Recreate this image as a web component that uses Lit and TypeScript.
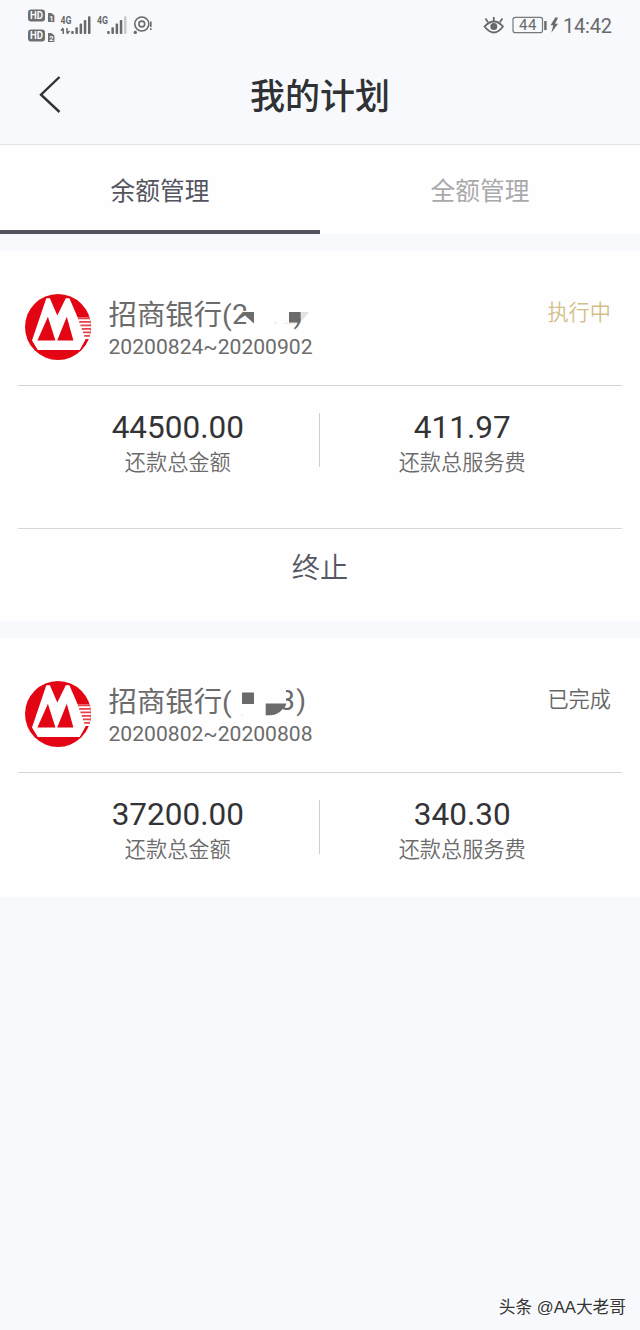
import { LitElement, html, svg, css, nothing } from "lit";
import { customElement, property, state } from "lit/decorators.js";

interface Plan {
  mask: "a" | "b";
  period: string;
  status: string;
  active: boolean;
  total: string;
  fee: string;
}

const PLANS: Plan[] = [
  { mask: "a", period: "20200824~20200902", status: "执行中", active: true, total: "44500.00", fee: "411.97" },
  { mask: "b", period: "20200802~20200808", status: "已完成", active: false, total: "37200.00", fee: "340.30" },
];

@customElement("status-bar")
class StatusBar extends LitElement {
  static styles = css`
    :host { display: flex; justify-content: space-between; height: 48px; color: #68696b; }
    svg { display: block; }
    text { font-family: Roboto, sans-serif; fill: #68696b; }
    .light { fill: #f8f9fc; }
  `;

  render() {
    const bars = (x: number, faded: boolean) =>
      [0, 1, 2, 3, 4].map((i) => svg`<rect x=${x + i * 4.2} y=${31 - i * 3.7} width="2.5" height=${3 + i * 3.7}
        rx="0.8" fill=${faded && i === 4 ? "#c9cacc" : "#68696b"} />`);
    const hd = (y: number, n: string) => svg`
      <rect x="28" y=${y} width="17" height="12" rx="3" fill="#6e6f71" />
      <text class="light" x="30" y=${y + 9.7} font-size="10.5" font-weight="700" textLength="13" lengthAdjust="spacingAndGlyphs">HD</text>
      <path d="M48 ${y + 3.5}h3.4l3 2.5v6.5h-6.4z" fill="#6e6f71" />
      <text class="light" x="49.2" y=${y + 11.4} font-size="7.5" font-weight="700">${n}</text>`;
    return html`
      <svg width="170" height="48" viewBox="0 0 170 48">
        ${hd(9.5, "1")}${hd(29.5, "2")}
        <text x="60.5" y="24" font-size="11" font-weight="700" textLength="11" lengthAdjust="spacingAndGlyphs">4G</text>
        <path d="M63.3 34v-5M61 30.8l2.3-2.8M67 28v5M69.5 31l-2.5 2.8" stroke="#68696b" stroke-width="1.5" fill="none" />
        ${bars(71.2, false)}
        <text x="97" y="24" font-size="11" font-weight="700" textLength="11" lengthAdjust="spacingAndGlyphs">4G</text>
        ${bars(107.2, true)}
        <circle cx="141.8" cy="24" r="7" fill="none" stroke="#68696b" stroke-width="1.6" />
        <circle cx="141.8" cy="24" r="2.9" fill="none" stroke="#68696b" stroke-width="1.6" />
        <circle cx="135.3" cy="32.4" r="1.7" fill="#68696b" />
        <path d="M150.8 21.5v5.5M150.8 28.3v1.7" stroke="#68696b" stroke-width="1.6" />
      </svg>
      <svg width="160" height="48" viewBox="480 0 160 48">
        <path d="M484.5 26.5Q494 16.5 503 26.5Q494 38.5 484.5 26.5Z" fill="none" stroke="#68696b" stroke-width="1.8" />
        <circle cx="493.8" cy="26.6" r="3.5" fill="#68696b" />
        <path d="M493.8 21.5v-4.5M488 22.2l-2.5-3.8M499.8 22.2l2.6-3.8" stroke="#68696b" stroke-width="1.8" />
        <rect x="513" y="17.3" width="29.5" height="15.4" rx="2.2" fill="none" stroke="#77787a" stroke-width="1.2" />
        <text x="519" y="30.3" font-size="15" textLength="17.5">44</text>
        <rect x="544.2" y="21" width="2.4" height="9" fill="#68696b" />
        <path d="M555.5 17.3l-5 8h2.8l-2 7.4 6.7-9h-3l3-6z" fill="#68696b" />
        <text x="563" y="32.6" font-size="20" textLength="49">14:42</text>
      </svg>`;
  }
}

@customElement("bank-logo")
class BankLogo extends LitElement {
  static styles = css`
    :host { display: block; width: 66px; height: 66px; flex: none; }
    svg { display: block; }
  `;

  render() {
    return html`<svg width="66" height="66" viewBox="0 0 66 66">
      <circle cx="33" cy="33" r="33" fill="#e30513" />
      <path d="M21.3 4.2h3.6L32.3 21.5 40.8 4.2h3.6L52.7 23.5 60.5 45.5 54.8 56H12.8L7 46.5Z" fill="#fff" />
      <path d="M22.9 22.8L12.4 46.4H30.4ZM41.8 22.8L32.2 46.4H48.4Z" fill="#e30513" />
      <path d="M52.6 23.4H64.6L66 33 64 45H59.3Z" fill="#fff" />
      <path d="M53 24.3H65M54.2 27.8H65.6M55.5 31.3H66M56.8 34.8H66M58 38.3H65.6M59.2 41.8H64.8" stroke="#e9404a" stroke-width="1.8" />
    </svg>`;
  }
}

@customElement("plan-card")
class PlanCard extends LitElement {
  @property({ attribute: false }) plan!: Plan;

  static styles = css`
    :host { display: block; background: #fefefe; padding: 0 18px; }
    .head { display: flex; height: 135px; border-bottom: 1.5px solid #d5d5d5; box-sizing: border-box; padding: 43px 11px 0 6.5px; }
    .who { flex: 1; padding-left: 18px; color: #6b6b6b; }
    .name { display: flex; font-size: 28.4px; line-height: 43px; height: 40px; white-space: pre; }
    .mask { display: block; flex: none; }
    .mask text { font-size: 28.4px; fill: #6b6b6b; }
    .period { font: 21.1px/26px Roboto, sans-serif; }
    .status { font-size: 21.2px; line-height: 38px; color: #666; font-weight: 350; }
    .status.active { color: #d3be8b; }
    .sums { display: flex; padding-top: 27px; height: 124px; box-sizing: border-box; }
    .sum { flex: 1; text-align: center; color: #6b6b6b; font-size: 21.2px; line-height: 30px; font-weight: 350; }
    .sum:first-child { padding-left: 18px; }
    .sum:last-child { padding-right: 18px; }
    .value { font: 31.5px/32px Roboto, sans-serif; color: #333336; padding-bottom: 4px; margin-top: -1px; }
    .rule { width: 1px; height: 54px; margin: 0 1px 0 -1px; background: #cfcfcf; }
    .stop { height: 93px; margin-top: 18px; border-top: 1.5px solid #d5d5d5; box-sizing: border-box;
      text-align: center; font-size: 28.2px; line-height: 80px; color: #555662; font-weight: 350; }
  `;

  private mask() {
    return this.plan.mask === "a"
      ? html`<svg class="mask" width="84" height="40" viewBox="0 0 84 40">
          <text x="0" y="30">2</text>
          <path d="M10.8 17h12v14h-8.6v-4z" fill="#fefefe" />
          <path d="M6.5 22.5l5-4.5H22v11.5l-7-6.2-2-1.8-4.5 3z" fill="#6b6b6b" />
          <text x="61.6" y="29">)</text>
          <path d="M58 3h20v15H58z" fill="#fefefe" />
          <path d="M68.5 18h8.8l-6.5 7.5-2.3-1z" fill="#e3e3e3" />
          <path d="M57 18h11.3v10.7H57z" fill="#6b6b6b" />
          <path d="M42.5 28h2v1.5h-2zM53 28.7h12v1H52z" fill="#e3e3e3" />
        </svg>`
      : html`<svg class="mask" width="84" height="40" viewBox="0 0 84 40">
          <text x="47" y="29">3</text>
          <path d="M46 6h8v17h-8z" fill="#fefefe" />
          <path d="M46 22h5v9h-5z" fill="#fefefe" />
          <path d="M10 11.5h12v11.5H10z" fill="#6b6b6b" />
          <path d="M33.7 22.5h20.6c0 2-2 4-3.5 5.5-4 4-7 6-12 6.2h-5.1z" fill="#6b6b6b" />
          <text x="64.2" y="29">)</text>
          <path d="M9 34.5l2-.5" stroke="#e4e4e4" />
        </svg>`;
  }

  render() {
    const p = this.plan;
    return html`
      <div class="head">
        <bank-logo></bank-logo>
        <div class="who">
          <div class="name">招商银行(${this.mask()}</div>
          <div class="period">${p.period}</div>
        </div>
        <div class="status ${p.active ? "active" : ""}">${p.status}</div>
      </div>
      <div class="sums">
        <div class="sum"><div class="value">${p.total}</div>还款总金额</div>
        <div class="rule"></div>
        <div class="sum"><div class="value">${p.fee}</div>还款总服务费</div>
      </div>
      ${p.active ? html`<div class="stop">终止</div>` : nothing}`;
  }
}

@customElement("app-root")
class AppRoot extends LitElement {
  @state() private tab = 0;

  static styles = css`
    :host { display: flex; flex-direction: column; position: relative; height: 1330px; overflow: hidden;
      background: #f7f9fc; font-family: Roboto, "Noto Sans CJK SC", sans-serif; }
    .nav { height: 97px; box-sizing: border-box; border-bottom: 1.5px solid #e3e4e8;
      display: grid; grid-template-columns: 100px 1fr 100px; align-items: start; }
    .back { display: block; }
    .title { text-align: center; font-size: 35px; font-weight: 500; color: #303134; line-height: 100px; height: 95px; }
    .tabs { display: flex; height: 89px; background: #fefefe; }
    .tab { flex: 1; text-align: center; font-size: 24.7px; line-height: 93px; color: #a9a9ac; box-sizing: border-box; height: 89px; }
    .tab.on { color: #53545f; border-bottom: 4px solid #53545f; }
    .list { display: flex; flex-direction: column; gap: 17px; padding-top: 17px; }
    .mark { position: absolute; right: 14px; bottom: 10px; font: 16.7px/24px "Liberation Sans", "Noto Sans CJK SC", sans-serif;
      color: #333; text-shadow: -1px -1px 0 #fff; white-space: pre; }
  `;

  render() {
    return html`
      <status-bar></status-bar>
      <div class="nav">
        <svg class="back" width="100" height="95" viewBox="0 0 100 95">
          <path d="M59.5 29L41 46.7 59.5 64" fill="none" stroke="#303134" stroke-width="2.4" />
        </svg>
        <div class="title">我的计划</div>
      </div>
      <div class="tabs">
        ${["余额管理", "全额管理"].map((t, i) => html`<div class="tab ${i === this.tab ? "on" : ""}" @click=${() => (this.tab = i)}>${t}</div>`)}
      </div>
      <div class="list">${PLANS.map((p) => html`<plan-card .plan=${p}></plan-card>`)}</div>
      <div class="mark">头条 @AA大老哥</div>`;
  }
}
